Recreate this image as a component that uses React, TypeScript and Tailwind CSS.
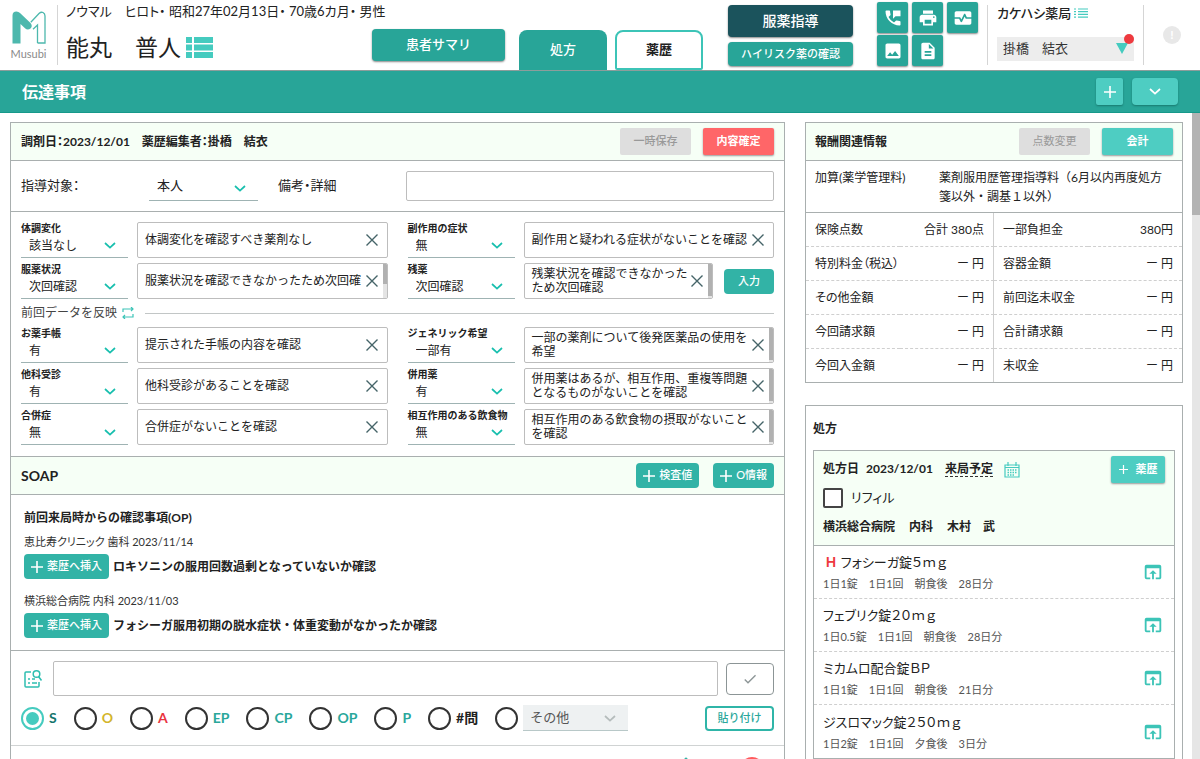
import clsx from 'clsx';
import type { ReactNode } from 'react';
import {
  MdCheck,
  MdDescription,
  MdImage,
  MdMonitorHeart,
  MdOpenInBrowser,
  MdPermPhoneMsg,
  MdPrint,
} from 'react-icons/md';

interface Field {
  label: string;
  value: string;
  note: string;
  twoLines?: boolean;
  bar?: 'half' | 'full';
  action?: string;
}

const statusFields: Field[] = [
  { label: '体調変化', value: '該当なし', note: '体調変化を確認すべき薬剤なし' },
  { label: '副作用の症状', value: '無', note: '副作用と疑われる症状がないことを確認' },
  {
    label: '服薬状況',
    value: '次回確認',
    note: '服薬状況を確認できなかったため次回確認',
    bar: 'half',
  },
  {
    label: '残薬',
    value: '次回確認',
    note: '残薬状況を確認できなかったため次回確認',
    twoLines: true,
    bar: 'full',
    action: '入力',
  },
];

const historyFields: Field[] = [
  { label: 'お薬手帳', value: '有', note: '提示された手帳の内容を確認' },
  {
    label: 'ジェネリック希望',
    value: '一部有',
    note: '一部の薬剤について後発医薬品の使用を希望',
    twoLines: true,
    bar: 'full',
  },
  { label: '他科受診', value: '有', note: '他科受診があることを確認' },
  {
    label: '併用薬',
    value: '有',
    note: '併用薬はあるが、相互作用、重複等問題となるものがないことを確認',
    twoLines: true,
    bar: 'full',
  },
  { label: '合併症', value: '無', note: '合併症がないことを確認' },
  {
    label: '相互作用のある飲食物',
    value: '無',
    note: '相互作用のある飲食物の摂取がないことを確認',
    twoLines: true,
    bar: 'full',
  },
];

const soapKinds = [
  { label: 'S', color: 'text-[#14756c]' },
  { label: 'O', color: 'text-[#d3b52c]' },
  { label: 'A', color: 'text-[#e9343f]' },
  { label: 'EP', color: 'text-[#2aa79b]' },
  { label: 'CP', color: 'text-[#2aa79b]' },
  { label: 'OP', color: 'text-[#2aa79b]' },
  { label: 'P', color: 'text-[#2aa79b]' },
  { label: '#問', color: 'text-[#222]' },
];

const previousItems = [
  {
    source: '恵比寿クリニック 歯科 2023/11/14',
    text: 'ロキソニンの服用回数過剰となっていないか確認',
  },
  {
    source: '横浜総合病院 内科 2023/11/03',
    text: 'フォシーガ服用初期の脱水症状・体重変動がなかったか確認',
  },
];

const fees = [
  ['保険点数', '合計 380点', '一部負担金', '380円'],
  ['特別料金（税込）', 'ー 円', '容器金額', 'ー 円'],
  ['その他金額', 'ー 円', '前回迄未収金', 'ー 円'],
  ['今回請求額', 'ー 円', '合計請求額', 'ー 円'],
  ['今回入金額', 'ー 円', '未収金', 'ー 円'],
];

const drugs = [
  { name: 'フォシーガ錠５ｍｇ', usage: '1日1錠　1日1回　朝食後　28日分', high: true },
  { name: 'フェブリク錠２０ｍｇ', usage: '1日0.5錠　1日1回　朝食後　28日分' },
  { name: 'ミカムロ配合錠ＢＰ', usage: '1日1錠　1日1回　朝食後　21日分' },
  { name: 'ジスロマック錠２５０ｍｇ', usage: '1日2錠　1日1回　夕食後　3日分' },
];

const tools = [
  { label: '電話', icon: MdPermPhoneMsg },
  { label: '印刷', icon: MdPrint },
  { label: '検査', icon: MdMonitorHeart },
  { label: '画像', icon: MdImage },
  { label: '文書', icon: MdDescription },
];

const Chevron = ({ className }: { className?: string }) => (
  <svg viewBox="0 0 12 7" className={clsx('h-[7px] w-3', className)} fill="none">
    <path d="M1 1l5 4.6L11 1" stroke="currentColor" strokeWidth="1.7" />
  </svg>
);

const Plus = ({ className }: { className?: string }) => (
  <svg viewBox="0 0 12 12" className={clsx('size-3', className)}>
    <path d="M6 0v12M0 6h12" stroke="currentColor" strokeWidth="1.6" />
  </svg>
);

const Logo = () => (
  <svg viewBox="0 0 34 33" className="h-[33px] w-[34px]" fill="none">
    <path
      d="M.5 32.500V4.500Q.5.5 4.500.5q2 0 3.500 1.500l10.500 10q2.500 3 0 5.500-3 2-5.500-.3L8.500 13v19.500z"
      fill="#4db8ad"
    />
    <path
      d="M25.500 32V14l-4.500 4.300M18.800 11.300L27 2.500Q29 .7 31 1.500q2 1 2 3.500v27h-7.500"
      stroke="#4db8ad"
      strokeWidth="1.300"
    />
  </svg>
);

const SelectBox = ({
  id,
  value,
  className,
}: {
  id: string;
  value: string;
  className?: string;
}) => (
  <div className="relative w-full border-b border-[#9fb3b3] text-[#18bfae]">
    <select
      id={id}
      defaultValue={value}
      className={clsx('block w-full appearance-none px-2 text-[#222] outline-none', className)}
    >
      <option>{value}</option>
    </select>
    <Chevron className="pointer-events-none absolute right-3 bottom-2" />
  </div>
);

const FieldRow = ({ field }: { field: Field }) => (
  <div className="flex h-9 items-center gap-[9px]">
    <div className="w-[107px] shrink-0">
      <label htmlFor={field.label} className="block text-[10px] leading-3 font-bold whitespace-nowrap">
        {field.label}
      </label>
      <SelectBox id={field.label} value={field.value} className="h-[23px]" />
    </div>
    <div className="relative flex h-9 min-w-0 flex-1 items-center overflow-hidden rounded-xs border border-[#bdbdbd] bg-white">
      <textarea
        aria-label={`${field.label}の詳細`}
        defaultValue={field.note}
        className={clsx(
          'h-[34px] min-w-0 flex-1 resize-none overflow-hidden pl-[7px] outline-none',
          field.twoLines ? 'pt-[3px] leading-[14px]' : 'leading-[34px]',
        )}
      />
      <button aria-label="クリア" className="mr-[9px] text-[#456468]">
        <svg viewBox="0 0 12 12" className="size-3">
          <path d="M.5.5l11 11M11.500.5l-11 11" stroke="currentColor" strokeWidth="1.400" />
        </svg>
      </button>
      {field.bar && (
        <div className="absolute inset-y-0 right-0 w-1 bg-[#e4e4e4]">
          <div className={clsx('bg-[#b1b1b1]', field.bar === 'half' ? 'h-5' : 'h-8')} />
        </div>
      )}
    </div>
    {field.action && (
      <button className="ml-[2px] h-[25px] w-[50px] shrink-0 rounded bg-[#32b3a6] text-[11px] font-medium text-white">
        {field.action}
      </button>
    )}
  </div>
);

const FieldGrid = ({ fields }: { fields: Field[] }) => (
  <div className="grid grid-cols-2 gap-x-5 gap-y-[5px]">
    {fields.map((field) => (
      <FieldRow key={field.label} field={field} />
    ))}
  </div>
);

const AddButton = ({ children }: { children: ReactNode }) => (
  <button className="flex h-[25px] shrink-0 items-center gap-1 rounded bg-[#32b3a6] px-[7px] text-[11px] font-medium whitespace-nowrap text-white">
    <Plus />
    {children}
  </button>
);

const Header = () => (
  <header className="flex h-[71px] shrink-0 border-b border-[#8d9d9b] bg-white">
    <div className="my-[5px] flex w-[58px] shrink-0 flex-col items-center border-r border-[#d5d5d5] pt-[6px]">
      <Logo />
      <span className="font-['Lato',sans-serif] text-[11px] leading-5 text-[#8a8a8a]">
        Musubi
      </span>
    </div>

    <div className="min-w-0 flex-1 pl-2">
      <p className="pt-[2px] text-[13px] leading-[18px] whitespace-nowrap [font-feature-settings:'palt']">
        ノウマル　ヒロト・ 昭和27年02月13日・ 70歳6カ月・ 男性
      </p>
      <div className="flex items-center gap-[5px] pt-[11px]">
        <h1 className="text-[23px] leading-8 whitespace-nowrap">能丸　普人</h1>
        <svg viewBox="0 0 27 21" className="h-[21px] w-[27px]" fill="#45cbbf">
          <path d="M0 0h6v6H0zM8 0h19v6H8zM0 7.500h6v6H0zM8 7.500h19v6H8zM0 15h6v6H0zM8 15h19v6H8z" />
        </svg>
      </div>
    </div>

    <button className="mt-[29px] h-8 w-[133px] shrink-0 rounded bg-[#28a598] text-[13px] font-medium text-white shadow-[0_1px_2px_#888]">
      患者サマリ
    </button>
    <nav className="ml-[14px] flex shrink-0 gap-2 self-end text-[13px]">
      <button className="h-10 w-[88px] rounded-t-lg bg-[#28a598] font-medium text-white">
        処方
      </button>
      <button className="h-10 w-[88px] rounded-t-lg rounded-b-xs border-2 border-[#3cc4b7] bg-white font-bold">
        薬歴
      </button>
    </nav>

    <div className="ml-[25px] flex w-[125px] shrink-0 flex-col gap-[5px] pt-[5px]">
      <button className="h-8 rounded bg-[#1b535c] text-sm font-medium text-white shadow-[0_1px_2px_#888]">
        服薬指導
      </button>
      <button className="h-6 rounded bg-[#28a598] text-[11px] font-medium text-white shadow-[0_1px_2px_#888]">
        ハイリスク薬の確認
      </button>
    </div>

    <div className="ml-6 grid shrink-0 grid-cols-3 content-start gap-x-1 gap-y-[2px] pt-[2px]">
      {tools.map(({ label, icon: Icon }) => (
        <button
          key={label}
          aria-label={label}
          className="flex size-[31px] items-center justify-center rounded-xs bg-[#28a598] text-white shadow-[0_1px_2px_#888]"
        >
          <Icon className="size-5" />
        </button>
      ))}
    </div>

    <div className="my-[5px] ml-[9px] w-[157px] shrink-0 border-x border-[#d5d5d5] pr-2 pl-[9px]">
      <div className="flex items-center gap-[3px] text-[13px] leading-4 font-medium [font-feature-settings:'palt']">
        カケハシ薬局
        <svg viewBox="0 0 14 10" className="h-[10px] w-[14px]">
          <path
            d="M0 1h2M4 1h10M0 3.700h2M4 3.700h10M0 6.400h2M4 6.400h10M0 9.100h2M4 9.100h10"
            stroke="#45cbbf"
            strokeWidth="1.200"
          />
        </svg>
      </div>
      <div className="relative mt-4">
        <select
          aria-label="担当者"
          defaultValue="掛橋　結衣"
          className="block h-6 w-[137px] appearance-none bg-[#ededed] px-[6px] text-[13px] text-[#333] outline-none"
        >
          <option>掛橋　結衣</option>
        </select>
        <svg viewBox="0 0 12 11" className="pointer-events-none absolute top-[6px] left-[119px] h-[11px] w-3">
          <path d="M0 0h12L6 11z" fill="#45cbbf" />
        </svg>
        <span className="absolute -top-[3px] left-[127px] size-[10px] rounded-full bg-[#ee3a3f]" />
      </div>
    </div>

    <div className="flex w-14 shrink-0 justify-center pt-[26px]">
      <span className="flex size-[18px] items-center justify-center rounded-full bg-[#e8e8e8] text-xs font-bold text-white">
        !
      </span>
    </div>
  </header>
);

const RecordCard = () => (
  <section className="min-w-0 self-start border border-[#a9afaf] bg-white">
    <div className="flex h-[38px] items-center gap-3 border-b border-[#a9afaf] bg-[#f6fff6] px-[10px]">
      <h3 className="flex-1 font-bold whitespace-nowrap [font-feature-settings:'palt']">
        調剤日：2023/12/01　薬歴編集者：掛橋　結衣
      </h3>
      <button className="h-[27px] w-[71px] rounded-xs bg-[#dedede] text-[11px] font-medium text-[#999]">
        一時保存
      </button>
      <button className="h-[27px] w-[71px] rounded-xs bg-[#ff6668] text-[11px] font-bold text-white shadow-[0_1px_2px_#999]">
        内容確定
      </button>
    </div>

    <div className="flex h-[51px] items-center border-b border-[#a9afaf] px-[10px] text-[13px] [font-feature-settings:'palt']">
      <label htmlFor="target" className="w-32 shrink-0">
        指導対象：
      </label>
      <div className="w-[109px] shrink-0">
        <SelectBox id="target" value="本人" className="h-7" />
      </div>
      <label htmlFor="remarks" className="ml-5 w-32 shrink-0">
        備考・詳細
      </label>
      <input
        id="remarks"
        className="h-[30px] min-w-0 flex-1 rounded-xs border border-[#bdbdbd] px-2 outline-none"
      />
    </div>

    <div className="border-b border-[#a9afaf] px-[10px] pt-[10px] pb-[11px]">
      <FieldGrid fields={statusFields} />
      <div className="flex h-7 items-center">
        <button className="flex items-center gap-[5px] whitespace-nowrap text-[#444]">
          前回データを反映
          <svg viewBox="0 0 12 12" className="size-3" fill="none" stroke="#3cc4b7" strokeWidth="1.200">
            <path d="M1 5V2h10M9 0l2 2-2 2M11 7v3H1M3 8l-2 2 2 2" />
          </svg>
        </button>
        <hr className="ml-[11px] flex-1 border-[#c2c6c6]" />
      </div>
      <FieldGrid fields={historyFields} />
    </div>

    <div className="flex h-[38px] items-center gap-[14px] border-b border-[#a9afaf] bg-[#f6fff6] px-[10px]">
      <h3 className="flex-1 text-sm font-bold">SOAP</h3>
      <AddButton>検査値</AddButton>
      <AddButton>O情報</AddButton>
    </div>

    <div className="border-b border-[#a9afaf] px-[13px] pt-[13px] pb-3">
      <h4 className="leading-5 font-bold">前回来局時からの確認事項(OP)</h4>
      <div className="flex flex-col gap-[14px] pt-[6px]">
        {previousItems.map((item) => (
          <div key={item.source}>
            <p className="text-[11px] leading-4 text-[#333] [font-feature-settings:'palt']">
              {item.source}
            </p>
            <div className="flex items-center gap-1 pt-1">
              <AddButton>薬歴へ挿入</AddButton>
              <p className="font-bold">{item.text}</p>
            </div>
          </div>
        ))}
      </div>
    </div>

    <div className="border-b border-[#d0d3d3] px-[10px] pt-[10px] pb-[14px]">
      <div className="flex items-center">
        <button aria-label="検索" className="ml-[2px]">
          <svg viewBox="0 0 20 20" className="size-5" fill="none" stroke="#2fbfb1" strokeWidth="1.500">
            <path d="M8 3H3Q2 3 2 4v13q0 1 1 1h12q1 0 1-1v-4" />
            <path d="M5 10h2M5 14h2M9 10h3M9 14h5" />
            <circle cx="13.500" cy="5" r="3.300" />
            <path d="M15.500 7.500l3 4" />
          </svg>
        </button>
        <input
          aria-label="記録"
          className="ml-[10px] h-[35px] min-w-0 flex-1 rounded-xs border border-[#bdbdbd] px-2 outline-none"
        />
        <button
          aria-label="確定"
          className="ml-2 flex h-8 w-12 items-center justify-center rounded border border-[#8c9596] text-[#8c9596]"
        >
          <MdCheck className="size-4" />
        </button>
      </div>

      <div className="flex items-center gap-[17px] pt-[9px]">
        {soapKinds.map((kind, i) => (
          <label
            key={kind.label}
            className={clsx('flex items-center gap-[5px] text-sm font-bold', kind.color)}
          >
            <input
              type="radio"
              name="soap"
              defaultChecked={i === 0}
              className="size-[23px] appearance-none rounded-full border-2 border-[#333] bg-clip-content p-[3px] checked:border-[#45cbbf] checked:bg-[#45cbbf]"
            />
            {kind.label}
          </label>
        ))}
        <div className="flex items-center gap-[5px]">
          <input
            type="radio"
            name="soap"
            aria-label="その他"
            className="size-[23px] appearance-none rounded-full border-2 border-[#333]"
          />
          <div className="relative w-[105px] border-b border-[#b8c8c8] text-[#b5bcbc]">
            <select
              aria-label="その他の区分"
              className="block h-[25px] w-full appearance-none bg-[#eef1f2] px-[7px] text-[13px] text-[#555] outline-none"
            >
              <option>その他</option>
            </select>
            <Chevron className="pointer-events-none absolute right-3 bottom-2" />
          </div>
        </div>
        <button className="ml-auto h-[25px] w-[69px] rounded border-2 border-[#2fb5a8] text-[11px] font-medium text-[#2aa79b]">
          貼り付け
        </button>
      </div>
    </div>

    <div className="flex h-14 justify-end gap-12 px-[10px] pt-[11px] text-[#32b3a6]">
      <Chevron className="rotate-180" />
      <button
        aria-label="削除"
        className="mr-[10px] flex size-6 items-center justify-center rounded-full bg-[#ff5a5c] text-white"
      >
        <Plus className="rotate-45" />
      </button>
    </div>
  </section>
);

const FeeCard = () => (
  <section className="border border-[#a9afaf] bg-white">
    <div className="flex h-[38px] items-center gap-3 border-b border-[#a9afaf] bg-[#f6fff6] px-[9px]">
      <h3 className="flex-1 font-bold">報酬関連情報</h3>
      <button className="h-[27px] w-[71px] rounded-xs bg-[#dedede] text-[11px] text-[#999]">
        点数変更
      </button>
      <button className="h-[27px] w-[71px] rounded-xs bg-[#4ecdc2] text-[11px] font-bold text-white shadow-[0_1px_2px_#999]">
        会計
      </button>
    </div>
    <dl className="flex border-b border-[#a9afaf] px-[9px] pt-[7px] pb-[6px] leading-[19px]">
      <dt className="w-[124px] shrink-0">加算(薬学管理料)</dt>
      <dd>薬剤服用歴管理指導料（6月以内再度処方箋以外・調基１以外）</dd>
    </dl>
    <table className="w-full table-fixed border-separate border-spacing-0">
      <tbody>
        {fees.map(([label, amount, label2, amount2]) => (
          <tr
            key={label}
            className="h-[34px] *:border-b *:border-[#cfcfcf] *:[border-bottom-style:dashed] last:h-[33px] last:*:border-b-0"
          >
            <th className="pl-[9px] text-left font-normal whitespace-nowrap [font-feature-settings:'palt']">
              {label}
            </th>
            <td className="border-r pr-[9px] text-right">{amount}</td>
            <th className="pl-[9px] text-left font-normal whitespace-nowrap">{label2}</th>
            <td className="pr-[9px] text-right">{amount2}</td>
          </tr>
        ))}
      </tbody>
    </table>
  </section>
);

const PrescriptionCard = () => (
  <section className="border border-[#a9afaf] bg-white px-[7px] pb-8">
    <h3 className="pt-[14px] pb-3 leading-[18px] font-bold">処方</h3>
    <div className="border border-[#a9afaf]">
      <div className="border-b border-[#a9afaf] bg-[#f6fff6] px-[9px] pt-[5px] pb-[9px]">
        <div className="flex items-center font-bold">
          <h4 className="flex-1 whitespace-nowrap">
            <span className="mr-[7px]">処方日</span>
            2023/12/01
            <a href="#visit" className="ml-3 border-b border-dashed border-[#333]">
              来局予定
            </a>
            <svg viewBox="0 0 16 16" className="ml-[11px] inline size-4" fill="none" stroke="#45cbbf">
              <path d="M1 3h14v12H1zM4 0v4M12 0v4M1 5.500h14" strokeWidth="1.200" />
              <path d="M3.500 8h10M3.500 10.500h10M3.500 13h7" strokeWidth="1.500" strokeDasharray="1.500 1" />
            </svg>
          </h4>
          <button className="flex h-[27px] w-[54px] items-center justify-center gap-2 rounded-xs bg-[#4ecdc2] text-[11px] text-white shadow-[0_1px_2px_#999]">
            <Plus className="size-[9px]" />
            薬歴
          </button>
        </div>
        <label className="flex items-center gap-2 pt-[5px] [font-feature-settings:'palt']">
          <input
            type="checkbox"
            className="size-5 appearance-none rounded-xs border-2 border-[#444] bg-white"
          />
          <span className="text-[13px]">リフィル</span>
        </label>
        <p className="flex gap-[14px] pt-[10px] leading-[18px] font-bold">
          <span>横浜総合病院</span>
          <span>内科</span>
          <span>木村　武</span>
        </p>
      </div>
      <ul className="divide-y divide-dashed divide-[#cfcfcf]">
        {drugs.map((drug) => (
          <li key={drug.name} className="flex h-[53px] items-center pr-[10px] pl-[9px]">
            <div className="flex-1">
              <p className="text-[13px] leading-6 [font-feature-settings:'palt']">
                {drug.high && <b className="mr-1 ml-[2px] text-[#ee3a3f]">Ｈ</b>}
                {drug.name}
              </p>
              <p className="text-[11px] leading-5 text-[#555]">{drug.usage}</p>
            </div>
            <button aria-label="詳細を開く" className="text-[#3cc4b7]">
              <MdOpenInBrowser className="size-[22px]" />
            </button>
          </li>
        ))}
      </ul>
    </div>
  </section>
);

export default function App() {
  return (
    <div className="flex h-screen flex-col overflow-hidden bg-white font-['Lato','Noto_Sans_CJK_JP',sans-serif] text-xs text-[#222]">
      <Header />
      <div className="flex h-[42px] shrink-0 items-center border-b border-[#16998a] bg-[#28a598] px-[22px] text-white">
        <h2 className="flex-1 text-base font-bold">伝達事項</h2>
        <button
          aria-label="追加"
          className="flex size-[27px] items-center justify-center rounded-xs bg-[#4ecdc2] shadow-[0_1px_2px_#187a70]"
        >
          <Plus />
        </button>
        <button
          aria-label="開く"
          className="ml-[9px] flex h-[27px] w-[46px] items-center justify-center rounded bg-[#4ecdc2] shadow-[0_1px_2px_#187a70]"
        >
          <Chevron />
        </button>
      </div>

      <div className="flex min-h-0 flex-1">
        <main className="grid min-w-0 flex-1 grid-cols-[minmax(0,1fr)_378px] gap-5 overflow-hidden pt-[9px] pr-[9px] pl-[10px]">
          <RecordCard />
          <div className="flex flex-col gap-[22px]">
            <FeeCard />
            <PrescriptionCard />
          </div>
        </main>
        <div className="w-2 shrink-0 bg-[#e6e6e6]">
          <div className="h-[102px] bg-[#b3b3b3]" />
        </div>
      </div>
    </div>
  );
}
